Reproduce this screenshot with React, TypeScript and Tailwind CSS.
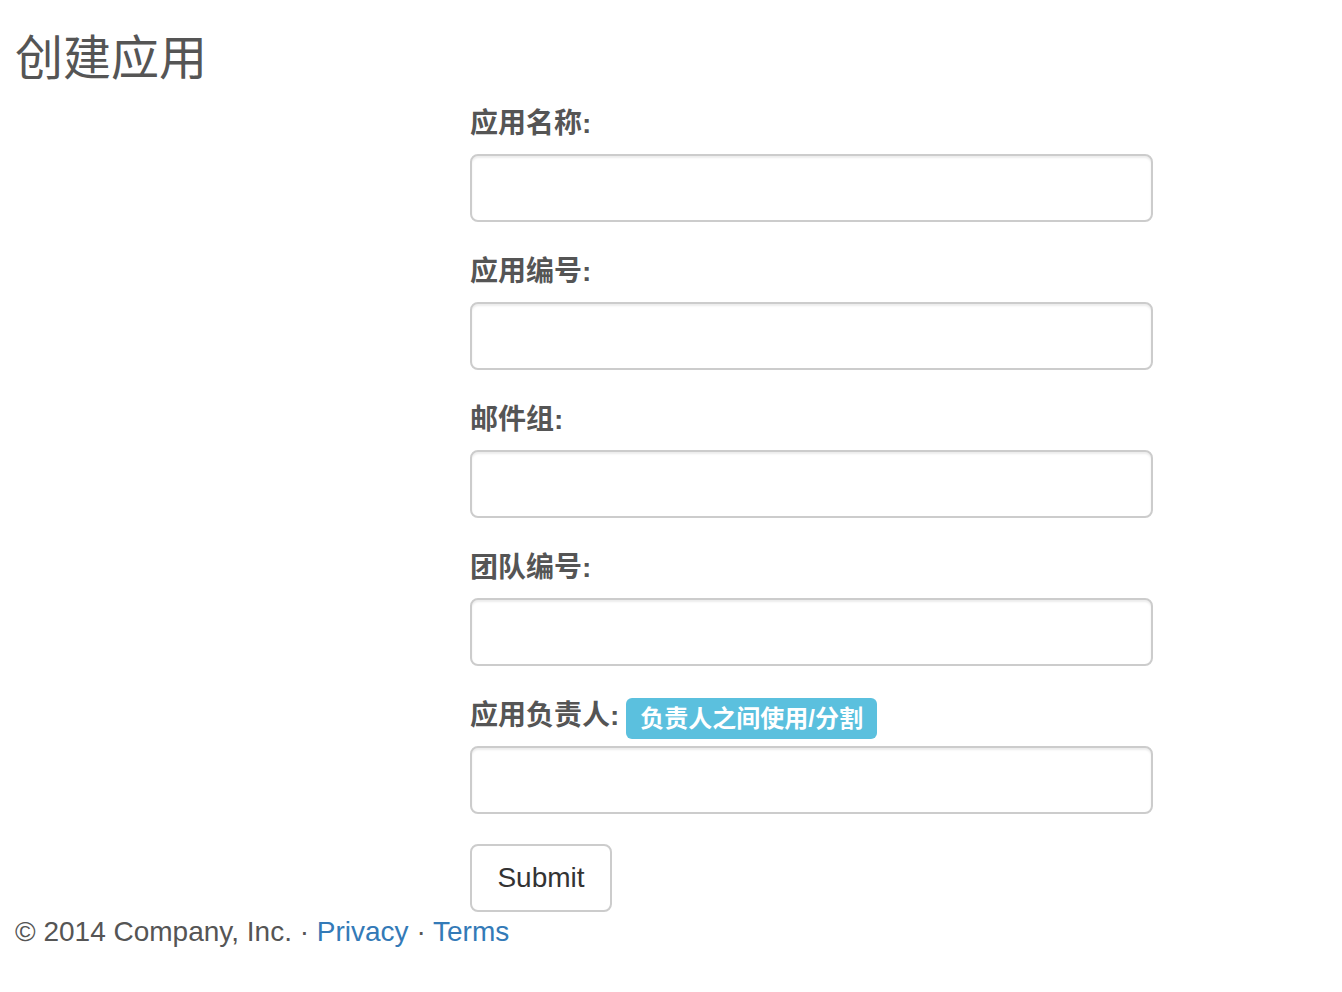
import React from "react";

const cjk = { fontFamily: '"Liberation Sans", "Noto Sans CJK SC", sans-serif' };

function Field({ label, badge }: { label: string; badge?: string }) {
  return (
    <div className="mb-[30px]">
      <div className="flex items-start h-[40px] mb-[10px]">
        <label className="text-[28px] leading-[40px] font-bold text-[#555]">{label}</label>
        {badge && (
          <span className="ml-[7px] mt-[2px] inline-flex items-center h-[41px] px-[14px] rounded-[6px] bg-[#5bc0de] text-white text-[24px] font-bold leading-none whitespace-nowrap">
            {badge}
          </span>
        )}
      </div>
      <input
        type="text"
        className="block w-[683px] h-[68px] border-2 border-[#ccc] rounded-[8px] bg-white shadow-[inset_0_2px_2px_rgba(0,0,0,0.075)] outline-none"
      />
    </div>
  );
}

export default function App() {
  return (
    <div className="min-h-[992px] bg-white text-[#555]" style={cjk}>
      <h3 className="pt-[32px] pl-[15px] text-[48px] leading-[53px] font-normal text-[#555]">创建应用</h3>
      <div className="pl-[470px] mt-[19px]">
        <Field label="应用名称:" />
        <Field label="应用编号:" />
        <Field label="邮件组:" />
        <Field label="团队编号:" />
        <Field label="应用负责人:" badge="负责人之间使用/分割" />
        <button className="block w-[142px] h-[68px] border-2 border-[#ccc] rounded-[8px] bg-white text-[28px] text-[#333]">
          Submit
        </button>
      </div>
      <footer className="pl-[15px] text-[28px] leading-[40px] text-[#555]">
        © 2014 Company, Inc. · <a className="text-[#337ab7]" href="#">Privacy</a> · <a className="text-[#337ab7]" href="#">Terms</a>
      </footer>
    </div>
  );
}
